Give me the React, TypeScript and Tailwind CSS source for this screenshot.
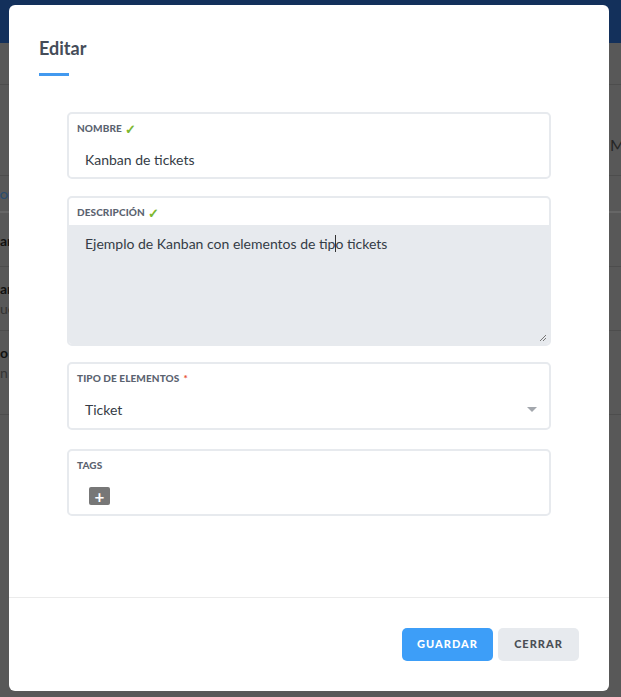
import React from "react";

const Check = () => <span className="ml-[3px] text-[13px] font-black leading-none text-[#7cb82f]">✓</span>;

const Label = ({ children }: { children: React.ReactNode }) => (
  <div className="flex h-[27px] items-end pl-2 pb-[5px] text-[10px] font-black uppercase tracking-[0.1px] text-[#5b6370]">
    {children}
  </div>
);

const Field = ({ children, className = "" }: { children: React.ReactNode; className?: string }) => (
  <div className={`overflow-hidden rounded-[5px] border-2 border-[#e7eaee] bg-white ${className}`}>{children}</div>
);

const Background = () => (
  <div className="h-[697px] w-full overflow-hidden bg-[#585858] font-['Lato',sans-serif]">
    <div className="h-[43px] bg-[#13305b]" />
    <div className="h-[42px] border-b border-[#4d4d4d]" />
    <div className="h-[90px] pl-[610px] pt-[48px] text-[16px] text-[#262626]">Mo</div>
    <div className="-ml-[8px] h-[38px] border-y border-[#4d4d4d] border-b-2 border-b-[#666] pt-[12px] text-[10px] font-bold text-[#2a4d70]">NOMBRE</div>
    <div className="h-[54px] border-b border-[#4d4d4d] pt-[17px] text-[14px] font-bold text-[#111]">ar</div>
    <div className="h-[64px] border-b border-[#4d4d4d] pt-[12px] text-[14px] leading-[20px]">
      <div className="font-bold text-[#111]">ar</div>
      <div className="text-[#333]">ue</div>
    </div>
    <div className="h-[84px] border-b border-[#4d4d4d] pt-[12px] text-[14px] leading-[20px]">
      <div className="font-bold text-[#111]">o</div>
      <div className="text-[#333]">n</div>
    </div>
  </div>
);

export default function App() {
  return (
    <div className="relative h-[697px] w-[621px] overflow-hidden">
      <Background />
      <div className="absolute left-[9px] top-[5px] flex h-[686px] w-[600px] flex-col rounded-[6px] bg-white font-['Lato',sans-serif]">
        <div className="px-[30px] pt-[31px]">
          <h2 className="text-[18px] font-bold leading-[24px] text-[#454d59]">Editar</h2>
          <div className="mt-[13px] h-[3px] w-[30px] bg-[#4299ef]" />
        </div>

        <div className="mx-[58px] mt-[36px] flex flex-col">
          <Field>
            <Label>
              Nombre <Check />
            </Label>
            <div className="flex h-[36px] items-center pl-[16px] text-[14px] text-[#343c46]">Kanban de tickets</div>
          </Field>

          <Field className="mt-[17px]">
            <Label>
              Descripción <Check />
            </Label>
            <div className="relative h-[119px] bg-[#e7eaee] pl-[16px] pt-[7px] text-[14px] leading-[20px] text-[#343c46]">
              Ejemplo de Kanban con elementos de tip
              <span className="mx-[-0.5px] inline-block h-[17px] w-px translate-y-[3px] bg-[#333]" />o tickets
              <svg className="absolute bottom-[2px] right-[2px]" width="8" height="8" viewBox="0 0 8 8">
                <path d="M7 1 L1 7 M7 4 L4 7" stroke="#777" strokeWidth="1" />
              </svg>
            </div>
          </Field>

          <Field className="mt-[16px]">
            <Label>
              Tipo de elementos <span className="ml-1 text-[#e8563b]">*</span>
            </Label>
            <div className="flex h-[37px] items-center justify-between pl-[16px] pr-[12px] text-[14px] text-[#343c46]">
              <span>Ticket</span>
              <svg width="10" height="6" viewBox="0 0 10 6">
                <path d="M0 0 L10 0 L5 5 Z" fill="#a3a7ad" />
              </svg>
            </div>
          </Field>

          <Field className="mt-[19px]">
            <Label>Tags</Label>
            <div className="flex h-[36px] items-center pl-[20px]">
              <span className="flex h-[18px] w-[21px] items-center justify-center rounded-[2px] bg-[#777] text-[17px] font-bold leading-none text-white">
                +
              </span>
            </div>
          </Field>
        </div>

        <div className="mt-auto border-t border-[#ebebeb]">
          <div className="flex h-[93px] items-start justify-end gap-[5px] pr-[30px] pt-[30px]">
            <button className="h-[33px] w-[91px] rounded-[5px] bg-[#3d9ef8] text-[11px] font-black tracking-[1px] text-white">
              GUARDAR
            </button>
            <button className="h-[33px] w-[81px] rounded-[5px] bg-[#e7eaee] text-[11px] font-black tracking-[1px] text-[#4a4f55]">
              CERRAR
            </button>
          </div>
        </div>
      </div>
    </div>
  );
}
